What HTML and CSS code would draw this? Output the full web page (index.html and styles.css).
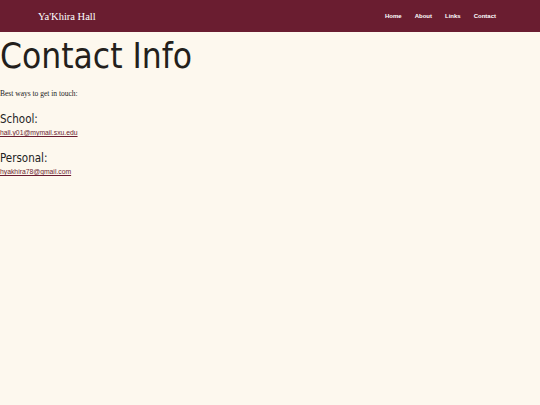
FILE: index.html
```html
<!DOCTYPE html>
<html>
<head>
<meta charset="utf-8">
<link rel="stylesheet" href="styles.css">
</head>
<body>
<header class="topbar">
  <div class="brand">Ya'Khira Hall</div>
  <nav class="nav">
    <a href="#">Home</a>
    <a href="#">About</a>
    <a href="#">Links</a>
    <a href="#">Contact</a>
  </nav>
</header>
<main class="content">
  <h1 class="title">Contact Info</h1>
  <p class="intro">Best ways to get in touch:</p>
  <h2 class="label">School:</h2>
  <a class="mail" href="#">hall.y01@mymail.sxu.edu</a>
  <h2 class="label">Personal:</h2>
  <a class="mail" href="#">hyakhira78@gmail.com</a>
</main>
</body>
</html>
```
FILE: styles.css
```css
html, body {
  margin: 0;
  padding: 0;
  background: #fdf8ee;
}
.topbar {
  height: 32px;
  background: #6a1d30;
  display: flex;
  align-items: center;
  justify-content: space-between;
  padding: 0 44px 0 38px;
}
.brand {
  font-family: "Liberation Serif", serif;
  font-size: 10.5px;
  color: #ffffff;
}
.nav {
  display: flex;
  gap: 13px;
}
.nav a {
  font-family: "Liberation Sans", Arial, sans-serif;
  font-weight: bold;
  font-size: 6px;
  color: #ffffff;
  text-decoration: none;
}
.content {
  display: flex;
  flex-direction: column;
  align-items: flex-start;
}
.title {
  font-family: "DejaVu Sans Condensed", "DejaVu Sans", sans-serif;
  font-stretch: condensed;
  font-weight: normal;
  font-size: 35px;
  line-height: 40px;
  color: #231f1c;
  margin: 4px 0 0 0;
}
.intro {
  font-family: "Liberation Serif", serif;
  font-size: 7.5px;
  color: #222;
  margin: 13px 0 0 0;
}
.label {
  font-family: "DejaVu Sans Condensed", "DejaVu Sans", sans-serif;
  font-stretch: condensed;
  font-weight: normal;
  font-size: 11.5px;
  color: #222;
  margin: 14px 0 0 0;
}
.mail {
  font-family: "Liberation Sans", Arial, sans-serif;
  font-size: 6.8px;
  line-height: 9px;
  color: #6a1d30;
  text-decoration: underline;
  text-decoration-thickness: 1px;
  margin-top: 2px;
}
```
